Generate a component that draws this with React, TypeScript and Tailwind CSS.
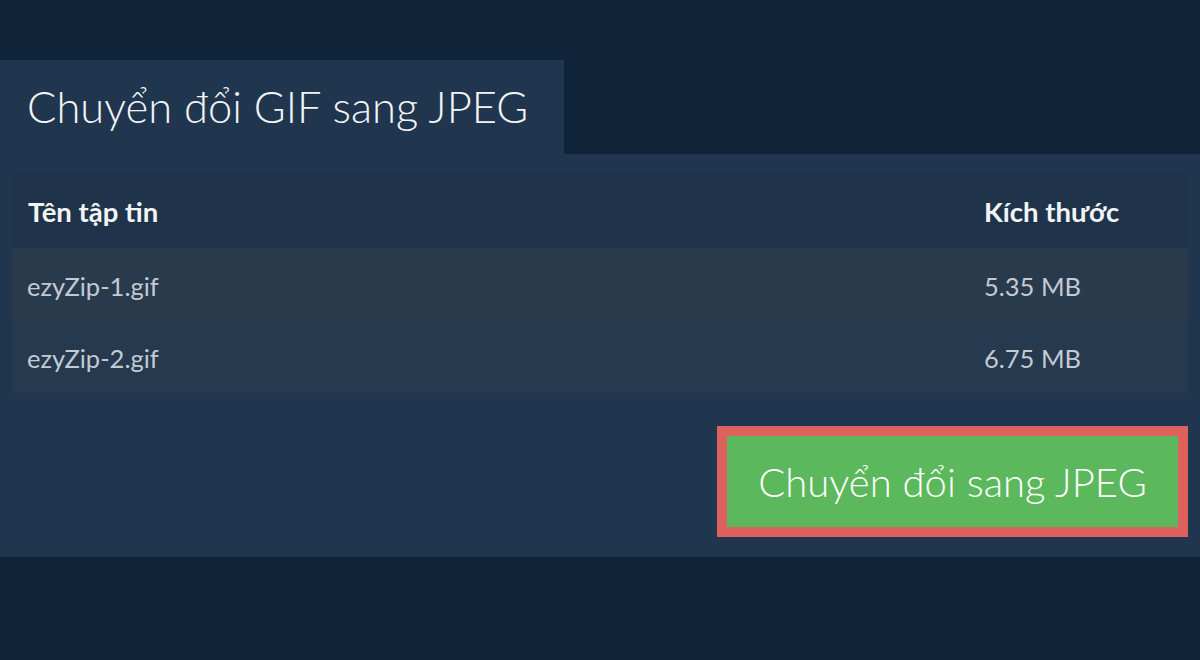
import React from 'react';

const files = [
  { name: 'ezyZip-1.gif', size: '5.35 MB' },
  { name: 'ezyZip-2.gif', size: '6.75 MB' },
];

export default function App() {
  return (
    <div className="w-[1200px] h-[660px] bg-[#0f2339] pt-[60px] font-['Lato','Noto_Sans',sans-serif]">
      {/* Tab heading */}
      <div className="w-[564px] h-[94px] bg-[#20364f] flex items-center px-[27px]">
        <h1 className="text-[43.5px] font-light text-[#f2f4f6] leading-none">Chuyển đổi GIF sang JPEG</h1>
      </div>

      {/* Panel */}
      <div className="bg-[#20364f] px-[12px] pt-[21px] pb-[20px]">
        <div className="w-full">
          <div className="h-[73px] bg-[#1f344b] flex items-center text-[27.5px] font-bold text-[#f3f4f6]">
            <div className="flex-1 pl-[16px]">Tên tập tin</div>
            <div className="w-[204px]">Kích thước</div>
          </div>
          {files.map((f, i) => (
            <div
              key={f.name}
              className={`flex items-center text-[25.5px] text-[#c3cad3] ${i === 0 ? 'h-[72px] bg-[#2a3a4d] pt-[5px]' : 'h-[73px] bg-[#26394f] pt-[3px]'}`}
            >
              <div className="flex-1 pl-[15px]">{f.name}</div>
              <div className="w-[204px]">{f.size}</div>
            </div>
          ))}
        </div>

        <div className="flex justify-end mt-[33px]">
          <button className="border-[10px] border-[#dd615d] bg-[#5cb85c] w-[471px] h-[111px] text-[40px] font-light text-white leading-none">
            Chuyển đổi sang JPEG
          </button>
        </div>
      </div>
    </div>
  );
}
